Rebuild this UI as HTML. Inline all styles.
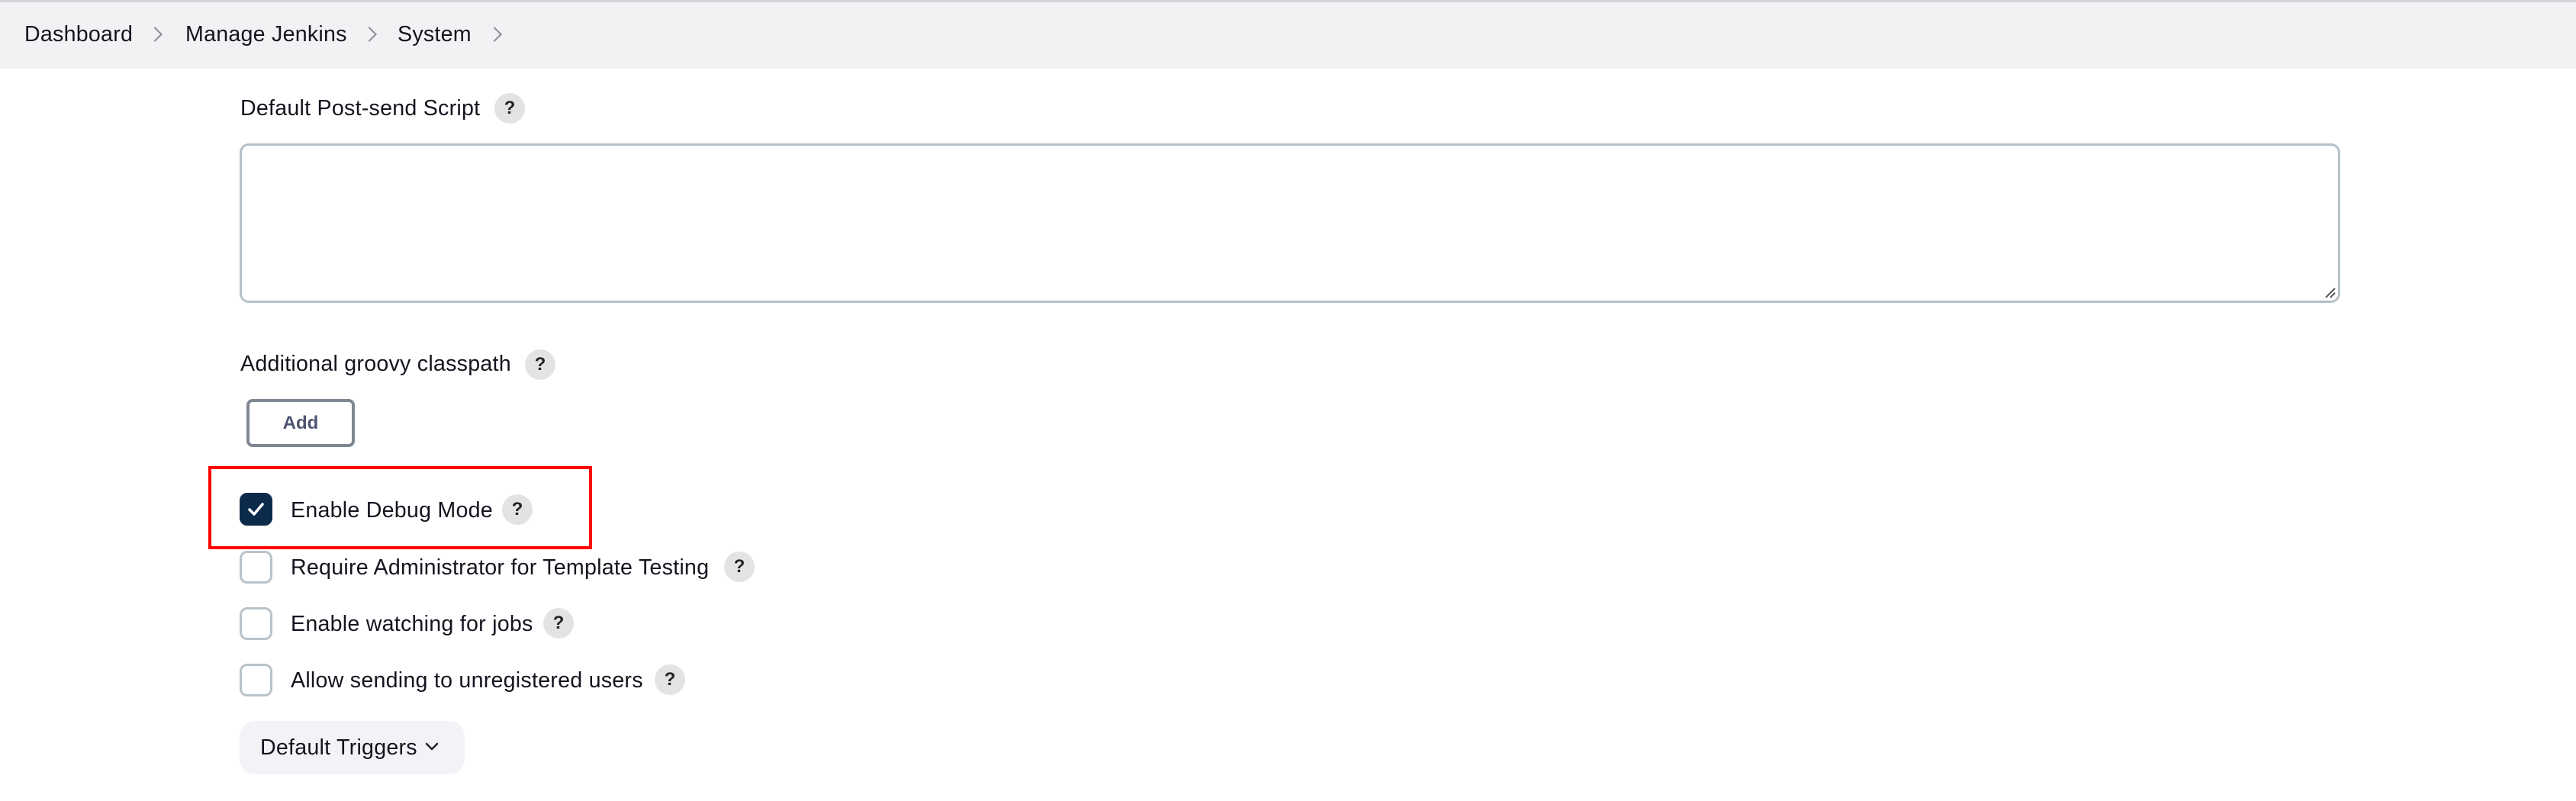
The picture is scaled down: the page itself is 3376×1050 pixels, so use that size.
<!DOCTYPE html>
<html><head><meta charset="utf-8"><style>
*{box-sizing:border-box;margin:0;padding:0}
body{width:3376px;height:1050px;background:#fff;font-family:"Liberation Sans",Arial,sans-serif;color:#14141f;position:relative;overflow:hidden}
.hdr{position:absolute;left:0;top:0;width:3376px;height:90px;background:#f2f2f5;border-top:3px solid #d6d6da}
.a{position:absolute;font-size:28.6px;letter-spacing:0.25px;white-space:nowrap;line-height:1}
.chev{position:absolute;width:14px;height:14px;border-right:2.5px solid #8a8a95;border-top:2.5px solid #8a8a95;transform:rotate(45deg)}
.help{position:absolute;width:40px;height:40px;border-radius:50%;background:#e3e3e6;font-weight:bold;font-size:24px;text-align:center;line-height:40px;color:#222}
.cb{position:absolute;left:314px;width:43px;height:43px;border:3px solid #b9c3ca;border-radius:10px;background:#fff}
</style></head><body>
<div class="hdr"></div>
<div class="a" style="left:32px;top:31px">Dashboard</div>
<div class="chev" style="left:196px;top:38px"></div>
<div class="a" style="left:243px;top:31px">Manage Jenkins</div>
<div class="chev" style="left:477px;top:38px"></div>
<div class="a" style="left:521px;top:31px">System</div>
<div class="chev" style="left:641px;top:38px"></div>

<div class="a" style="left:315px;top:128px">Default Post-send Script</div>
<div class="help" style="left:648px;top:122px">?</div>
<div style="position:absolute;left:314px;top:188px;width:2753px;height:209px;border:3.5px solid #b6c0c7;border-radius:12px"></div>
<svg style="position:absolute;left:3046px;top:376px" width="16" height="16"><path d="M2 14L14 2M8 14L14 8" stroke="#555" stroke-width="2"/></svg>

<div class="a" style="left:315px;top:463px">Additional groovy classpath</div>
<div class="help" style="left:688px;top:458px">?</div>
<div style="position:absolute;left:323px;top:523px;width:142px;height:63px;border:4px solid #7f8893;border-radius:8px;font-weight:bold;font-size:24px;color:#4e5370;text-align:center;line-height:55px">Add</div>

<div style="position:absolute;left:273px;top:611px;width:503px;height:109px;border:4.5px solid #ff0000"></div>
<div class="cb" style="top:646px;background:#0c2b4b;border-color:#0c2b4b"><svg width="37" height="37" style="position:absolute;left:0;top:0"><path d="M10 19l6 6 11-13" stroke="#fff" stroke-width="3.5" fill="none" stroke-linecap="round" stroke-linejoin="round"/></svg></div>
<div class="a" style="left:381px;top:655px">Enable Debug Mode</div>
<div class="help" style="left:658px;top:648px">?</div>

<div class="cb" style="top:722px"></div>
<div class="a" style="left:381px;top:730px">Require Administrator for Template Testing</div>
<div class="help" style="left:949px;top:723px">?</div>

<div class="cb" style="top:796px"></div>
<div class="a" style="left:381px;top:804px">Enable watching for jobs</div>
<div class="help" style="left:712px;top:797px">?</div>

<div class="cb" style="top:870px"></div>
<div class="a" style="left:381px;top:878px">Allow sending to unregistered users</div>
<div class="help" style="left:858px;top:871px">?</div>

<div style="position:absolute;left:314px;top:945px;width:295px;height:70px;background:#f3f3f7;border-radius:20px"></div>
<div class="a" style="left:341px;top:966px">Default Triggers</div>
<svg style="position:absolute;left:555px;top:970px" width="22" height="18"><path d="M4 5l7 7 7-7" stroke="#222" stroke-width="2.5" fill="none" stroke-linecap="round" stroke-linejoin="round"/></svg>
</body></html>
